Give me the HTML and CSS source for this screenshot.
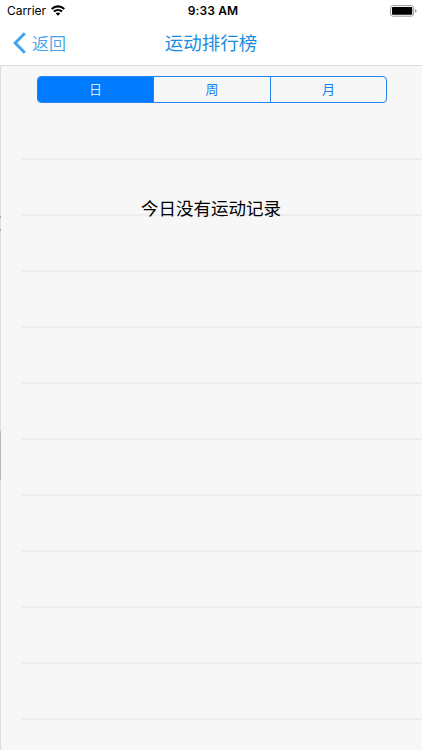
FILE: index.html
```html
<!DOCTYPE html>
<html lang="zh-CN">
<head>
<meta charset="utf-8">
<title>运动排行榜</title>
<link rel="stylesheet" href="styles.css">
</head>
<body>
<header class="top">
  <div class="status">
    <div class="carrier"><span class="carrier-name">Carrier</span>
      <svg class="wifi" width="14" height="11" viewBox="0 0 14 11" fill="none" stroke="#000" stroke-width="2.1"><path d="M.7 4C4.3.5 9.7.5 13.3 4M2.9 6.6c2.4-2.2 5.8-2.2 8.2 0"/><path d="M4.7 8.4c1.3-1.2 3.3-1.2 4.6 0L7 10.7z" fill="#000" stroke="none"/></svg>
    </div>
    <time class="clock">9:33 AM</time>
    <svg class="battery" width="27" height="12" viewBox="0 0 27 12"><rect x=".6" y=".6" width="23" height="10.6" rx="2.2" fill="#fff" stroke="#999" stroke-width="1"/><rect x="2" y="2" width="20.2" height="7.8" rx=".8"/><path d="M25 4q1.6.4 1.6 1.9T25 7.8z" fill="#999"/></svg>
  </div>
  <nav class="nav">
    <a class="back"><svg width="13" height="22" viewBox="0 0 13 22" fill="none" stroke="#43a3ec" stroke-width="3"><path d="M11.8 1.2 2.2 11l9.6 9.8"/></svg><span>返回</span></a>
    <h1 class="title">运动排行榜</h1>
    <span></span>
  </nav>
</header>
<main class="content">
  <div class="segments">
    <button class="segment selected">日</button>
    <button class="segment">周</button>
    <button class="segment">月</button>
  </div>
  <p class="empty">今日没有运动记录</p>
</main>
</body>
</html>
```
FILE: styles.css
```css
* { box-sizing: border-box; }
body {
  margin: 0;
  height: 750px;
  overflow: hidden;
  display: flex;
  flex-direction: column;
  background: #f7f7f7;
  color: #000;
  font-family: "Noto Sans CJK SC", sans-serif;
}
.top {
  height: 66px;
  background: #fff;
  border-bottom: 1px solid #dcdadd;
}
.status {
  height: 21px;
  padding: 0 5px 0 7px;
  display: grid;
  grid-template-columns: 1fr auto 1fr;
  align-items: center;
  font: 12px/21px Inter, sans-serif;
}
.carrier { display: flex; align-items: center; gap: 5px; }
.carrier-name { letter-spacing: -.05px; }
.clock { font-weight: 600; letter-spacing: .1px; transform: translateX(1px); }
.battery { justify-self: end; }
.nav {
  height: 44px;
  padding: 0 13px;
  display: grid;
  grid-template-columns: 1fr auto 1fr;
  align-items: center;
}
.back {
  display: flex;
  align-items: center;
  gap: 6px;
  color: #43a3ec;
  font-size: 17px;
  font-weight: 350;
  line-height: 24px;
}
.title {
  margin: 0;
  color: #198de0;
  font-size: 18.5px;
  font-weight: 400;
  line-height: 26px;
  padding-bottom: 2px;
}
.content {
  flex: 1;
  padding: 10px 35px 0 37px;
  background:
    linear-gradient(#b9b9bb, #b9b9bb) 0 365px / 1px 49px no-repeat,
    linear-gradient(#aaa, #aaa) 0 150px / 1px 2px no-repeat,
    linear-gradient(#aaa, #aaa) 0 163px / 1px 2px no-repeat,
    linear-gradient(#dedede, #dedede) 0 0 / 1px 100% no-repeat,
    repeating-linear-gradient(transparent 0 54px, #ededef 54px 56px) 22px 38px / 400px 646px no-repeat,
    #f7f7f7;
}
.segments {
  height: 27px;
  width: 350px;
  display: grid;
  grid-template-columns: 115px 117px 116px;
  border: 1px solid #2385ed;
  border-radius: 4px;
  overflow: hidden;
}
.segment {
  border: 0;
  border-left: 1px solid #2385ed;
  padding: 0 0 2px;
  background: none;
  color: #1682ee;
  font: 400 13px/23px "Noto Sans CJK SC", sans-serif;
}
.segment.selected {
  border-left: 0;
  background: #007aff;
  color: #d4e9ff;
}
.empty {
  margin: 92px 0 0;
  transform: translateX(-1px);
  text-align: center;
  font-size: 17.5px;
  line-height: 26px;
}
```
